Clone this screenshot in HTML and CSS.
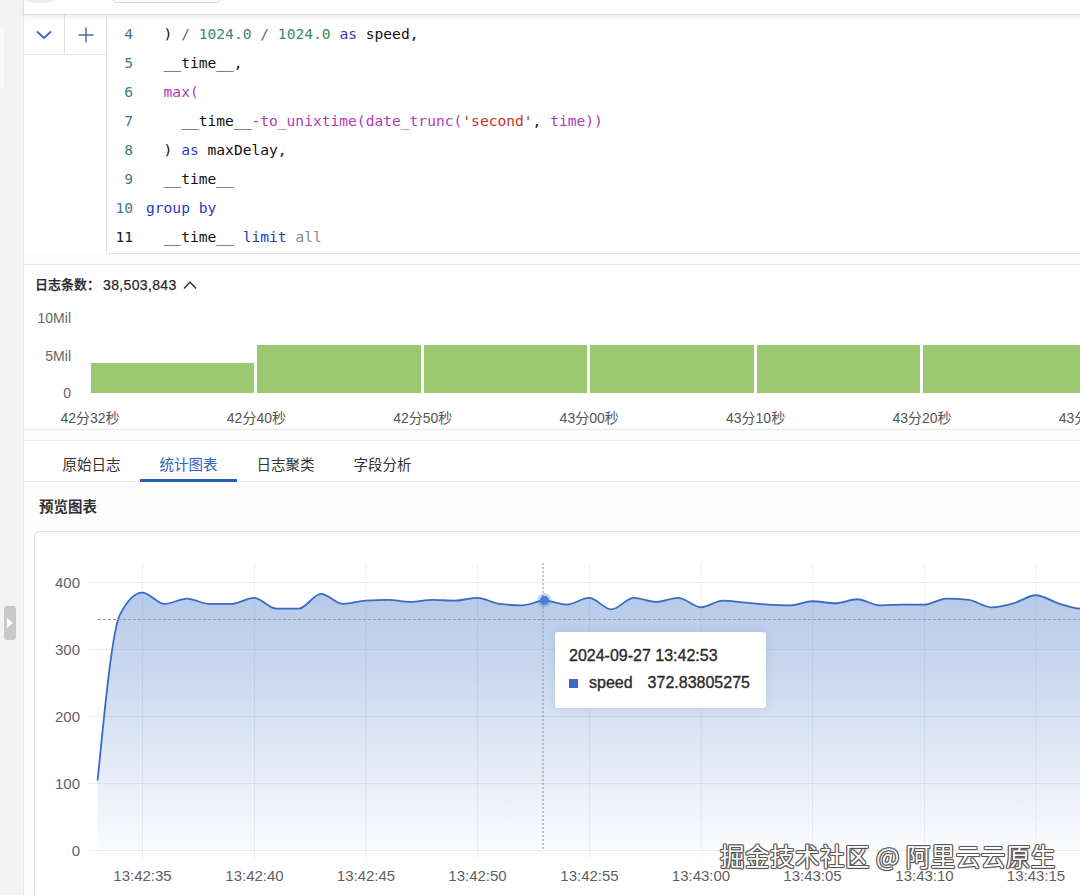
FILE: index.html
```html
<!DOCTYPE html>
<html lang="zh-CN">
<head>
<meta charset="utf-8">
<title>日志查询</title>
<link rel="stylesheet" href="styles.css">
</head>
<body>
<div class="app">
  <aside class="rail">
    <div class="rail-notch"></div>
    <button class="rail-handle" aria-label="展开">
      <svg width="6" height="10" viewBox="0 0 6 10"><polygon points="0,0 6,5 0,10" fill="#fff"/></svg>
    </button>
  </aside>

  <main class="main">
    <div class="topbar">
      <span class="tb-pill"></span>
      <span class="tb-box"></span>
    </div>

    <section class="editor">
      <div class="editor-actions">
        <button class="ea-btn ea-first" aria-label="折叠">
          <svg width="16" height="16" viewBox="0 0 16 16"><path d="M1.5 5 L8 11 L14.5 5" fill="none" stroke="#3b6dc2" stroke-width="2" stroke-linecap="round" stroke-linejoin="round"/></svg>
        </button>
        <button class="ea-btn" aria-label="新增">
          <svg width="16" height="16" viewBox="0 0 16 16"><path d="M8 0.5 V15.5 M0.5 8 H15.5" fill="none" stroke="#4a6fae" stroke-width="1.5"/></svg>
        </button>
      </div>
      <div class="code">
        <div class="ln"><span class="num">4</span><span class="src">  ) <span class="op">/</span> <span class="n">1024.0</span> <span class="op">/</span> <span class="n">1024.0</span> <span class="k">as</span> speed,</span></div>
        <div class="ln"><span class="num">5</span><span class="src">  __time__,</span></div>
        <div class="ln"><span class="num">6</span><span class="src">  <span class="f">max(</span></span></div>
        <div class="ln"><span class="num">7</span><span class="src">    __time__<span class="f">-to_unixtime(date_trunc(</span><span class="s">'second'</span>, <span class="f">time))</span></span></div>
        <div class="ln"><span class="num">8</span><span class="src">  ) <span class="k">as</span> maxDelay,</span></div>
        <div class="ln"><span class="num">9</span><span class="src">  __time__</span></div>
        <div class="ln"><span class="num">10</span><span class="src"><span class="k">group by</span></span></div>
        <div class="ln"><span class="num cur">11</span><span class="src">  __time__ <span class="k">limit</span> <span class="g">all</span></span></div>
      </div>
    </section>

    <section class="histo">
      <div class="histo-head">日志条数：<span class="histo-count">38,503,843</span>
        <svg class="histo-caret" width="14" height="10" viewBox="0 0 14 10"><path d="M1 8.5 L7 2 L13 8.5" fill="none" stroke="#333" stroke-width="1.5"/></svg>
      </div>
      <div class="histo-plot">
        <div class="yaxis"><span>10Mil</span><span>5Mil</span><span>0</span></div>
        <div class="bars">
          <div class="bar" style="height:30px"></div>
          <div class="bar" style="height:48px"></div>
          <div class="bar" style="height:48px"></div>
          <div class="bar" style="height:48px"></div>
          <div class="bar" style="height:48px"></div>
          <div class="bar" style="height:48px"></div>
          <div class="bar" style="height:48px"></div>
        </div>
      </div>
      <div class="xlabels">
        <div class="tick"><span>42分32秒</span></div>
        <div class="tick"><span>42分40秒</span></div>
        <div class="tick"><span>42分50秒</span></div>
        <div class="tick"><span>43分00秒</span></div>
        <div class="tick"><span>43分10秒</span></div>
        <div class="tick"><span>43分20秒</span></div>
        <div class="tick"><span>43分30秒</span></div>
      </div>
    </section>

    <section class="results">
      <nav class="tabs">
        <a class="tab">原始日志</a>
        <a class="tab active">统计图表</a>
        <a class="tab">日志聚类</a>
        <a class="tab">字段分析</a>
      </nav>
      <h3 class="preview-title">预览图表</h3>
      <div class="chart-card">
        <svg class="chart" width="1065" height="370" viewBox="35 532 1065 370">
          <defs>
            <linearGradient id="areaFill" gradientUnits="userSpaceOnUse" x1="0" y1="590" x2="0" y2="852">
              <stop offset="0" stop-color="#3a6fc4" stop-opacity="0.38"/>
              <stop offset="0.5" stop-color="#3a6fc4" stop-opacity="0.2"/>
              <stop offset="1" stop-color="#3a6fc4" stop-opacity="0.02"/>
            </linearGradient>
          </defs>
          <g class="grid-h">
            <line x1="88" y1="582.5" x2="1100" y2="582.5"/>
            <line x1="88" y1="649.5" x2="1100" y2="649.5"/>
            <line x1="88" y1="716.5" x2="1100" y2="716.5"/>
            <line x1="88" y1="783.5" x2="1100" y2="783.5"/>
            <line x1="88" y1="850.5" x2="1100" y2="850.5"/>
          </g>
          <g class="grid-v">
            <line x1="142.5" y1="563" x2="142.5" y2="860"/>
            <line x1="254.5" y1="563" x2="254.5" y2="860"/>
            <line x1="366" y1="563" x2="366" y2="860"/>
            <line x1="477.5" y1="563" x2="477.5" y2="860"/>
            <line x1="589.5" y1="563" x2="589.5" y2="860"/>
            <line x1="701" y1="563" x2="701" y2="860"/>
            <line x1="812.5" y1="563" x2="812.5" y2="860"/>
            <line x1="924.5" y1="563" x2="924.5" y2="860"/>
            <line x1="1036" y1="563" x2="1036" y2="860"/>
          </g>
          <path id="area" class="area" d=""/>
          <path id="line" class="line" d=""/>
          <line class="avg" x1="98" y1="619.5" x2="1100" y2="619.5"/>
          <line class="cross" x1="543" y1="563" x2="543" y2="850"/>
          <circle class="halo" cx="544.4" cy="600.2" r="7"/>
          <circle class="dot" cx="544.4" cy="600.2" r="4.5"/>
          <g class="ylab">
            <text x="80" y="582.5">400</text>
            <text x="80" y="649.5">300</text>
            <text x="80" y="716.5">200</text>
            <text x="80" y="783.5">100</text>
            <text x="80" y="850.5">0</text>
          </g>
          <g class="xlab">
            <text x="142.5" y="875.5">13:42:35</text>
            <text x="254.5" y="875.5">13:42:40</text>
            <text x="366" y="875.5">13:42:45</text>
            <text x="477.5" y="875.5">13:42:50</text>
            <text x="589.5" y="875.5">13:42:55</text>
            <text x="701" y="875.5">13:43:00</text>
            <text x="812.5" y="875.5">13:43:05</text>
            <text x="924.5" y="875.5">13:43:10</text>
            <text x="1036" y="875.5">13:43:15</text>
          </g>
        </svg>
        <div class="tooltip">
          <div class="tt-title">2024-09-27 13:42:53</div>
          <div class="tt-row"><span class="tt-mark"></span><span class="tt-name">speed</span><span class="tt-val">372.83805275</span></div>
        </div>
        <div class="watermark">掘金技术社区 @ 阿里云云原生</div>
      </div>
    </section>
  </main>
</div>
<script src="script.js"></script>
</body>
</html>
```

FILE: styles.css
```css
* { box-sizing: border-box; margin: 0; padding: 0; }
html, body { width: 1080px; height: 895px; overflow: hidden; }
body {
  font-family: "Liberation Sans", "Noto Sans CJK SC", sans-serif;
  color: #333;
  background: #fff;
}
button { font: inherit; cursor: pointer; }

.app { display: flex; height: 895px; }

/* left rail */
.rail { flex: none; width: 23px; background: #f3f3f4; position: relative; }
.rail-notch { position: absolute; left: 0; top: 28px; width: 4px; height: 60px; background: #fafafa; }
.rail-handle {
  position: absolute; left: 4px; top: 606px;
  width: 12px; height: 34px;
  border: none; border-radius: 3px;
  background: #c9c9c9;
  display: flex; align-items: center; justify-content: center;
}

/* main column */
.main {
  flex: none; width: 1100px;
  background: #fcfcfc;
  border-left: 1px solid #e6e6e6;
}

.topbar {
  position: relative; z-index: 1;
  height: 15px;
  background: #fff;
  border-bottom: 1px solid #d9d9d9;
  box-shadow: 0 2px 6px rgba(0, 0, 0, 0.07);
  display: flex; align-items: flex-end; gap: 58px;
  padding-left: 1px;
  overflow: hidden;
}
.tb-pill { width: 30px; height: 20px; margin-bottom: 11px; border-radius: 8px; background: #ececec; }
.tb-box { width: 107px; height: 20px; margin-bottom: 11px; border: 1px solid #d8d8d8; border-radius: 3px; background: #fff; }

/* editor */
.editor { display: flex; height: 239px; background: #fff; }
.editor-actions { display: flex; align-self: flex-start; }
.ea-btn {
  width: 41px; height: 40px;
  background: #fff;
  border: none; border-bottom: 1px solid #e3e3e3;
  display: flex; align-items: center; justify-content: center;
}
.ea-first { border-right: 1px solid #e3e3e3; }
.code {
  flex: 1;
  border-left: 1px solid #e3e3e3;
  border-bottom: 1px solid #e3e3e3;
  padding-top: 4px;
  font-family: "DejaVu Sans Mono", "Liberation Mono", monospace;
  font-size: 14.6px;
  color: #111;
}
.ln { display: flex; height: 29px; line-height: 29px; }
.num { width: 26px; text-align: right; color: #3d7a88; }
.num.cur { color: #0f1a3a; }
.src { margin-left: 13px; white-space: pre; }
.k { color: #2a3cbf; }
.n { color: #3d8a6c; }
.f { color: #b23ab6; }
.s { color: #c8302a; }
.g { color: #8a8a8a; }
.op { color: #666; }

/* histogram */
.histo {
  margin-top: 10px;
  height: 166px;
  background: #fff;
  border-top: 1px solid #e8e8e8;
  border-bottom: 1px solid #e8e8e8;
  padding: 10px 0 0 11px;
  overflow: hidden;
}
.histo-head {
  display: flex; align-items: center;
  height: 20px; line-height: 20px;
  font-size: 13px; font-weight: 500; color: #2a2a2a;
  -webkit-text-stroke: 0.25px #2a2a2a;
}
.histo-count { font-size: 14px; letter-spacing: 0.35px; margin-left: 3px; }
.histo-caret { margin-left: 6px; }
.histo-plot { display: flex; margin-top: 13px; }
.yaxis {
  flex: none; width: 36px; height: 95px;
  display: flex; flex-direction: column; justify-content: space-between; align-items: flex-end;
  font-size: 14px; line-height: 20px; color: #666;
}
.bars {
  display: flex; align-items: flex-end; gap: 3px;
  height: 75px; margin-top: 10px; margin-left: 20px;
}
.bar { flex: none; width: 163.4px; background: #9dc872; }
.xlabels { display: flex; margin-top: 5px; padding-left: 55px; height: 20px; }
.tick { flex: none; width: 166.4px; font-size: 14px; line-height: 20px; color: #555; white-space: nowrap; }
.tick span { display: inline-block; transform: translateX(-50%); }

/* results */
.results { margin-top: 10px; background: #fdfdfd; height: 460px; }
.tabs {
  display: flex; height: 42px;
  padding-left: 19px;
  background: #fff;
  border-top: 1px solid #ececec;
  border-bottom: 1px solid #e8e8e8;
}
.tab {
  width: 97px; height: 41px;
  padding-top: 3px;
  display: flex; align-items: center; justify-content: center;
  font-size: 14.5px; color: #333;
}
.tab.active { color: #2f63bd; box-shadow: inset 0 -3px 0 #2b5fb7; }

.preview-title {
  margin: 14px 0 13px 15px;
  font-size: 14.5px; line-height: 22px; font-weight: 700; color: #333;
}

.chart-card {
  position: relative;
  margin-left: 10px;
  width: 1080px; height: 400px;
  background: #fff;
  border: 1px solid #e2e2e2;
  border-radius: 6px;
  overflow: hidden;
}
.chart { display: block; }
.grid-h line { stroke: #ececec; stroke-width: 1; }
.grid-v line { stroke: #eef0f4; stroke-width: 1; }
.area { fill: url(#areaFill); }
.line { fill: none; stroke: #3a6cc2; stroke-width: 1.8; stroke-linejoin: round; }
.avg { stroke: #9a9a9a; stroke-width: 1; stroke-dasharray: 3 2; }
.cross { stroke: #8c8c8c; stroke-width: 1; stroke-dasharray: 2 2; }
.halo { fill: rgba(74, 123, 208, 0.3); }
.dot { fill: #4d7ed2; }
.ylab text { font-family: "Liberation Sans", sans-serif; font-size: 15px; fill: #5f5f5f; text-anchor: end; dominant-baseline: central; }
.xlab text { font-family: "Liberation Sans", sans-serif; font-size: 15px; fill: #5f5f5f; text-anchor: middle; dominant-baseline: central; }

.tooltip {
  position: absolute; left: 520px; top: 100px;
  width: 211px; height: 76px;
  padding: 12px 0 0 14px;
  background: #fff;
  border-radius: 3px;
  box-shadow: 0 0 10px rgba(0, 0, 0, 0.1);
  font-family: "Liberation Sans", sans-serif;
  font-size: 16px; color: #2b2b2b;
  -webkit-text-stroke: 0.35px #2b2b2b;
}
.tt-title { line-height: 24px; }
.tt-row { display: flex; align-items: center; margin-top: 3px; line-height: 24px; }
.tt-mark { width: 9px; height: 9px; background: #3a6cc2; margin-right: 11px; }
.tt-name { margin-right: 15px; }

.watermark {
  position: absolute; left: 685px; top: 310px;
  font-family: "Noto Sans CJK SC", sans-serif;
  font-size: 24.5px; line-height: 28px;
  letter-spacing: 0.5px;
  color: #fff;
  white-space: nowrap;
  text-shadow: 1px 0 0 #555, -1px 0 0 #555, 0 1px 0 #555, 0 -1px 0 #555,
               1px 1px 1px #555, -1px -1px 0 #777, 1px -1px 0 #777, -1px 1px 0 #777;
}
```

FILE: script.js
```js
(function () {
  var vals = [104.5, 352, 385, 368, 376, 368, 368, 377, 361, 361, 383, 368, 373, 374, 371,
              374, 373, 377, 368, 366, 372.84, 367, 377, 360, 377, 371, 377, 363, 373, 370,
              367, 366, 372, 369, 375, 366, 367, 367, 376, 374, 363, 369, 381, 369, 361, 365];
  var x0 = 97.6, dx = 22.34, base = 850.5, ky = 0.67;
  var xs = [], ys = [];
  vals.forEach(function (v, i) { xs.push(x0 + i * dx); ys.push(base - v * ky); });
  var n = xs.length;
  function sign(v) { return v < 0 ? -1 : 1; }
  // monotone cubic tangents (Fritsch–Carlson, as in d3.curveMonotoneX)
  var t = new Array(n);
  for (var i = 1; i < n - 1; i++) {
    var h0 = xs[i] - xs[i - 1], h1 = xs[i + 1] - xs[i];
    var s0 = (ys[i] - ys[i - 1]) / h0, s1 = (ys[i + 1] - ys[i]) / h1;
    var p = (s0 * h1 + s1 * h0) / (h0 + h1);
    t[i] = (sign(s0) + sign(s1)) * Math.min(Math.abs(s0), Math.abs(s1), 0.5 * Math.abs(p)) || 0;
  }
  var hs = xs[1] - xs[0];
  t[0] = (3 * (ys[1] - ys[0]) / hs - t[1]) / 2;
  var he = xs[n - 1] - xs[n - 2];
  t[n - 1] = (3 * (ys[n - 1] - ys[n - 2]) / he - t[n - 2]) / 2;
  function f(v) { return v.toFixed(2); }
  var d = 'M' + f(xs[0]) + ',' + f(ys[0]);
  for (var j = 0; j < n - 1; j++) {
    var k = (xs[j + 1] - xs[j]) / 3;
    d += ' C' + f(xs[j] + k) + ',' + f(ys[j] + k * t[j]) + ' ' +
         f(xs[j + 1] - k) + ',' + f(ys[j + 1] - k * t[j + 1]) + ' ' +
         f(xs[j + 1]) + ',' + f(ys[j + 1]);
  }
  document.getElementById('line').setAttribute('d', d);
  document.getElementById('area').setAttribute('d',
    d + ' L' + f(xs[n - 1]) + ',' + base + ' L' + f(xs[0]) + ',' + base + ' Z');
})();
```
